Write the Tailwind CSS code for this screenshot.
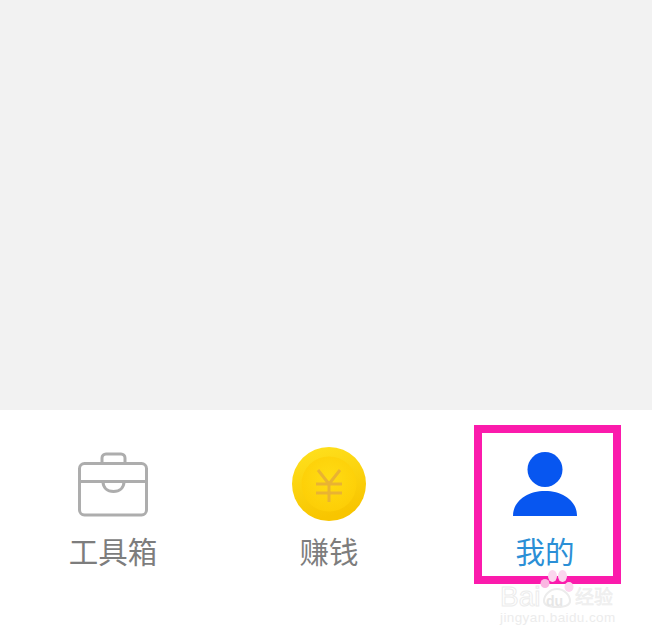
<!DOCTYPE html>
<html lang="zh-CN">
<head>
  <meta charset="UTF-8">
  <title>我的</title>
  <script src="https://cdn.jsdelivr.net/npm/@tailwindcss/browser@4"></script>
</head>
<body class="bg-white">
  <div class="relative w-[652px] h-[640px] overflow-hidden font-['Noto_Sans_CJK_SC','Noto_Sans',sans-serif]">
    <!-- empty content area -->
    <div class="h-[410px] bg-[#f2f2f2]"></div>

    <!-- tab bar -->
    <nav class="grid grid-cols-[216px_216px_216px] pl-[5px] pt-[37px]">
      <div class="flex flex-col items-center">
        <svg class="w-[74px] h-[74px]" viewBox="0 0 74 74" fill="none" stroke="#adadad" stroke-width="3">
          <path d="M26 16.500V11a4 4 0 0 1 4-4h15a4 4 0 0 1 4 4v5.500"/>
          <rect x="3.500" y="16.500" width="67" height="51.500" rx="5"/>
          <path d="M3.500 34.500h67"/>
          <path d="M27 34.500c0 6.500 4.500 10 10.500 10s10.500-3.500 10.500-10"/>
        </svg>
        <span class="mt-[9px] text-[29.500px] leading-[40px] text-[#7d7d7d]">工具箱</span>
      </div>
      <div class="flex flex-col items-center">
        <svg class="w-[74px] h-[74px]" viewBox="0 0 74 74">
          <defs>
            <linearGradient id="coinRim" x1="0" y1="0" x2="0.300" y2="1">
              <stop offset="0" stop-color="#ffe21f"/>
              <stop offset="1" stop-color="#f8c500"/>
            </linearGradient>
            <radialGradient id="coinFace" cx="0.500" cy="0.400" r="0.600">
              <stop offset="0" stop-color="#ffdc14"/>
              <stop offset="1" stop-color="#fdce06"/>
            </radialGradient>
          </defs>
          <circle cx="37" cy="37" r="37" fill="url(#coinRim)"/>
          <circle cx="37" cy="37" r="27.500" fill="url(#coinFace)"/>
          <path d="M26 23l11 14 11-14M37 37v18M24 37h26M24 46h26" fill="none" stroke="#e9b332" stroke-width="3"/>
        </svg>
        <span class="mt-[9px] text-[29.500px] leading-[40px] text-[#7d7d7d]">赚钱</span>
      </div>
      <div class="flex flex-col items-center">
        <svg class="w-[74px] h-[74px]" viewBox="0 0 74 74">
          <circle cx="37" cy="22.500" r="17.500" fill="#0756f0"/>
          <path d="M5 69c0-15 14-25 32-25s32 10 32 25z" fill="#0756f0"/>
        </svg>
        <span class="mt-[9px] text-[29.500px] leading-[40px] text-[#2b8fd6]">我的</span>
      </div>
    </nav>

    <!-- highlight box drawn over the tab -->
    <div class="absolute left-[474px] top-[425px] w-[147px] h-[159px] border-[8px] border-[#fb1bac]"></div>

    <!-- watermark -->
    <div class="absolute left-[498px] top-[570px] w-[140px] h-[56px]">
      <svg class="absolute left-[42px] top-0 w-[34px] h-[38px]" viewBox="0 0 34 38">
        <path d="M17 19c-7 0-13 6-13 12 0 4 4 6 13 6s13-2 13-6c0-6-6-12-13-12z" fill="#fff" stroke="#ececec" stroke-width="2"/>
        <ellipse cx="12.500" cy="6" rx="4.500" ry="6" fill="#fbd6ee"/>
        <ellipse cx="22.500" cy="6" rx="4.500" ry="6" fill="#fbd6ee"/>
        <ellipse cx="5" cy="13.500" rx="4.500" ry="4.500" fill="#fbb7e2"/>
        <ellipse cx="29" cy="17" rx="4.500" ry="5" fill="#fbd6ee"/>
      </svg>
      <span class="absolute left-[2px] top-[13px] text-[28px] leading-[28px] font-['Liberation_Sans',sans-serif] text-white [-webkit-text-stroke:1px_#ececec]">Bai</span>
      <span class="absolute left-[48px] top-[24px] text-[14px] leading-[14px] font-['Liberation_Sans',sans-serif] font-bold text-[#e6e6e6]">du</span>
      <span class="absolute left-[77px] top-[14px] text-[19px] leading-[24px] text-[#f2f2f2] [-webkit-text-stroke:0.500px_#ececec]">经验</span>
      <span class="absolute left-[2px] top-[40px] text-[13.500px] leading-[16px] font-['Liberation_Sans',sans-serif] tracking-[0.400px] text-[#ececec]">jingyan.baidu.com</span>
    </div>
  </div>
</body>
</html>
